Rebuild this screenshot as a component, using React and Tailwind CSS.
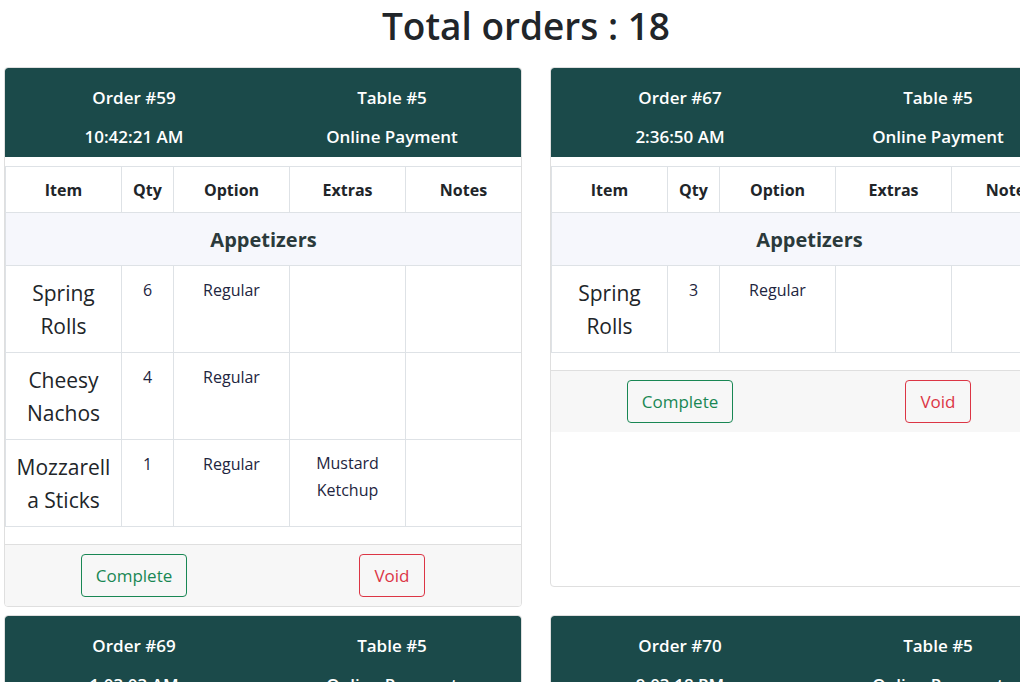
import React from "react";

const orders = [
  {
    id: 59,
    time: "10:42:21 AM",
    items: [
      { name: "Spring Rolls", qty: 6, option: "Regular", extras: [] },
      { name: "Cheesy Nachos", qty: 4, option: "Regular", extras: [] },
      { name: "Mozzarella Sticks", qty: 1, option: "Regular", extras: ["Mustard", "Ketchup"] },
    ],
  },
  {
    id: 67,
    time: "2:36:50 AM",
    tall: true,
    items: [{ name: "Spring Rolls", qty: 3, option: "Regular", extras: [] }],
  },
  {
    id: 69,
    time: "1:03:03 AM",
    items: [{ name: "Spring Rolls", qty: 2, option: "Regular", extras: [] }],
  },
  {
    id: 70,
    time: "9:03:18 PM",
    items: [{ name: "Cheesy Nachos", qty: 2, option: "Regular", extras: [] }],
  },
];

function OrderCard({ order }) {
  return (
    <div
      className={`flex flex-col rounded-[4px] border border-[#dfdfdf] bg-white overflow-hidden ${
        order.tall ? "h-[520px]" : ""
      }`}
    >
      <div className="bg-[#1b4a4a] text-white font-semibold text-[17px] grid grid-cols-2 gap-y-[12px] pt-[16px] pb-[7px] rounded-t-[3px]">
        <div className="text-center leading-[27px]">Order #{order.id}</div>
        <div className="text-center leading-[27px]">Table #5</div>
        <div className="text-center leading-[27px]">{order.time}</div>
        <div className="text-center leading-[27px]">Online Payment</div>
      </div>
      <div className="mt-[9px]">
        <table className="w-full table-fixed border-collapse">
          <colgroup>
            <col className="w-[116px]" />
            <col className="w-[52px]" />
            <col className="w-[116px]" />
            <col className="w-[116px]" />
            <col className="w-[116px]" />
          </colgroup>
          <thead>
            <tr className="text-[16px] font-bold text-[#212529]">
              {["Item", "Qty", "Option", "Extras", "Notes"].map((h) => (
                <th key={h} className="border border-[#dee2e6] pt-[11px] pb-[10px] leading-[24px] text-center whitespace-nowrap">
                  {h}
                </th>
              ))}
            </tr>
          </thead>
          <tbody>
            <tr>
              <td colSpan={5} className="border border-[#dee2e6] bg-[#f6f7fc] text-center text-[20px] font-bold text-[#2b3a3b] leading-[30px] pt-[12px] pb-[10px]">
                Appetizers
              </td>
            </tr>
            {order.items.map((it, i) => (
              <tr key={i} className="align-top">
                <td className="border border-[#dee2e6] text-center text-[21px] leading-[33px] text-[#212529] px-[8px] pt-[11px] pb-[9px] [overflow-wrap:anywhere]">
                  {it.name}
                </td>
                <td className="border border-[#dee2e6] text-center text-[16px] leading-[24px] text-[#1e2540] pt-[12px]">
                  {it.qty}
                </td>
                <td className="border border-[#dee2e6] text-center text-[16px] leading-[24px] text-[#1e2540] pt-[12px]">
                  {it.option}
                </td>
                <td className="border border-[#dee2e6] text-center text-[16px] leading-[27px] text-[#1e2540] pt-[10px]">
                  {it.extras.map((e) => (
                    <div key={e}>{e}</div>
                  ))}
                </td>
                <td className="border border-[#dee2e6]"></td>
              </tr>
            ))}
          </tbody>
        </table>
      </div>
      <div className="h-[17px]" />
      <div className="bg-[#f7f7f7] border-t border-[#dfdfdf] grid grid-cols-2 py-[9px]">
        <div className="flex justify-center">
          <button className="border border-[#198754] text-[#198754] rounded-[4px] px-[14px] py-[8px] text-[17px] leading-[25px] bg-transparent">
            Complete
          </button>
        </div>
        <div className="flex justify-center">
          <button className="border border-[#dc3545] text-[#dc3545] rounded-[4px] px-[14px] py-[8px] text-[17px] leading-[25px] bg-transparent">
            Void
          </button>
        </div>
      </div>
    </div>
  );
}

export default function App() {
  return (
    <div className="w-[1020px] h-[682px] overflow-hidden bg-white font-['Open_Sans',sans-serif]">
      <div className="w-[1052px]">
        <h1 className="text-center text-[37px] font-semibold text-[#212529] h-[52px] leading-[52px]">
          Total orders : 18
        </h1>
        <div className="mt-[15px] pl-[4px] grid grid-cols-[518px_518px] gap-x-[28px] gap-y-[8px] items-start">
          {orders.map((o) => (
            <OrderCard key={o.id} order={o} />
          ))}
        </div>
      </div>
    </div>
  );
}
